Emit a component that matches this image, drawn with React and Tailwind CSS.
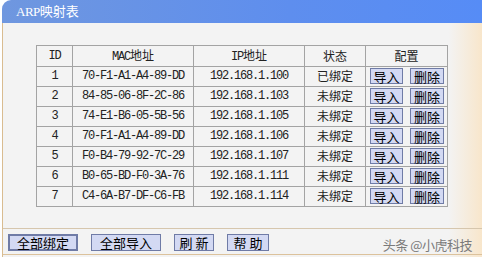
import React from 'react';

const rows = [
    { id: 1, mac: '70-F1-A1-A4-89-DD', ip: '192.168.1.100', state: '已绑定' },
    { id: 2, mac: '84-85-06-8F-2C-86', ip: '192.168.1.103', state: '未绑定' },
    { id: 3, mac: '74-E1-B6-05-5B-56', ip: '192.168.1.105', state: '未绑定' },
    { id: 4, mac: '70-F1-A1-A4-89-DD', ip: '192.168.1.106', state: '未绑定' },
    { id: 5, mac: 'F0-B4-79-92-7C-29', ip: '192.168.1.107', state: '未绑定' },
    { id: 6, mac: 'B0-65-BD-F0-3A-76', ip: '192.168.1.111', state: '未绑定' },
    { id: 7, mac: 'C4-6A-B7-DF-C6-FB', ip: '192.168.1.114', state: '未绑定' },
];

const cjk = { fontFamily: '"Noto Sans CJK SC", sans-serif' };

// small lavender buttons used in the table and the footer
function Btn({ children, className = '' }) {
    return (
        <button
            className={`flex items-center justify-center bg-[#d3d9f3] border border-[#6f7ba6] text-[13px] leading-none text-black ${className}`}
            style={cjk}>
            {children}
        </button>
    );
}

const cell = 'border border-[#a3a3a3] text-center p-0';

export default function App() {
    return (
        <div className="w-[482px] h-[257px] bg-white overflow-hidden flex flex-col"
            style={{ fontFamily: '"Liberation Mono", "Noto Sans CJK SC", monospace' }}>
            {/* ── Title bar ─────────────────────── */}
            <div className="ml-[2px] h-[23px] rounded-tl-[9px] bg-[linear-gradient(to_right,#6f97df,#5e8eee_60%,#568cf6)] flex items-center pl-[14px]">
                <span className="text-white text-[13px] tracking-[-0.5px]" style={{ fontFamily: '"Liberation Serif", "Noto Sans CJK SC", serif' }}>
                    ARP<span style={cjk} className="tracking-normal">映射表</span>
                </span>
            </div>

            {/* ── Body ──────────────────────────── */}
            <div className="ml-[2px] border-l border-[#d9bc90] flex-1 flex flex-col bg-[linear-gradient(to_right,#f3f3f3_93%,#f8e6cb)]">
                <div className="h-[205px] pt-[22px] pl-[33px]">
                    <table className="border-collapse table-fixed w-[411px] text-[12px] tracking-[-1.2px] text-[#222]">
                        <colgroup>
                            <col className="w-[36px]" />
                            <col className="w-[121px]" />
                            <col className="w-[111px]" />
                            <col className="w-[61px]" />
                            <col className="w-[82px]" />
                        </colgroup>
                        <thead>
                            <tr className="h-[20px]">
                                <th className={`${cell} font-normal`}>ID</th>
                                <th className={`${cell} font-normal`}>MAC<span style={cjk} className="tracking-normal">地址</span></th>
                                <th className={`${cell} font-normal`}>IP<span style={cjk} className="tracking-normal">地址</span></th>
                                <th className={`${cell} font-normal tracking-normal`} style={cjk}>状态</th>
                                <th className={`${cell} font-normal tracking-normal`} style={cjk}>配置</th>
                            </tr>
                        </thead>
                        <tbody>
                            {rows.map(r => (
                                <tr key={r.id} className="h-[20px]">
                                    <td className={cell}>{r.id}</td>
                                    <td className={cell}>{r.mac}</td>
                                    <td className={cell}>{r.ip}</td>
                                    <td className={`${cell} tracking-normal`} style={cjk}>{r.state}</td>
                                    <td className={`${cell} tracking-normal`}>
                                        <div className="flex items-center gap-[7px] pl-[4px]">
                                            <Btn className="w-[33px] h-[16px]">导入</Btn>
                                            <Btn className="w-[34px] h-[16px]">删除</Btn>
                                        </div>
                                    </td>
                                </tr>
                            ))}
                        </tbody>
                    </table>
                </div>

                {/* ── Footer buttons ─────────────── */}
                <div className="flex-1 border-t border-[#d6c6ad] border-b border-b-[#dcc29c] flex items-start pt-[5px] pl-[5px] pr-[10px]">
                    <Btn className="w-[70px] h-[17px] border-2 border-[#1d2755]">全部绑定</Btn>
                    <Btn className="w-[70px] h-[17px] ml-[13px]">全部导入</Btn>
                    <Btn className="w-[40px] h-[17px] ml-[13px]">刷 新</Btn>
                    <Btn className="w-[42px] h-[17px] ml-[13px]">帮 助</Btn>
                    <span className="ml-auto mt-[1px] text-[13px] text-[#7a7a7a] tracking-[-0.5px]" style={cjk}>头条 @小虎科技</span>
                </div>
                <div className="h-[2px]" />
            </div>
        </div>
    );
}
